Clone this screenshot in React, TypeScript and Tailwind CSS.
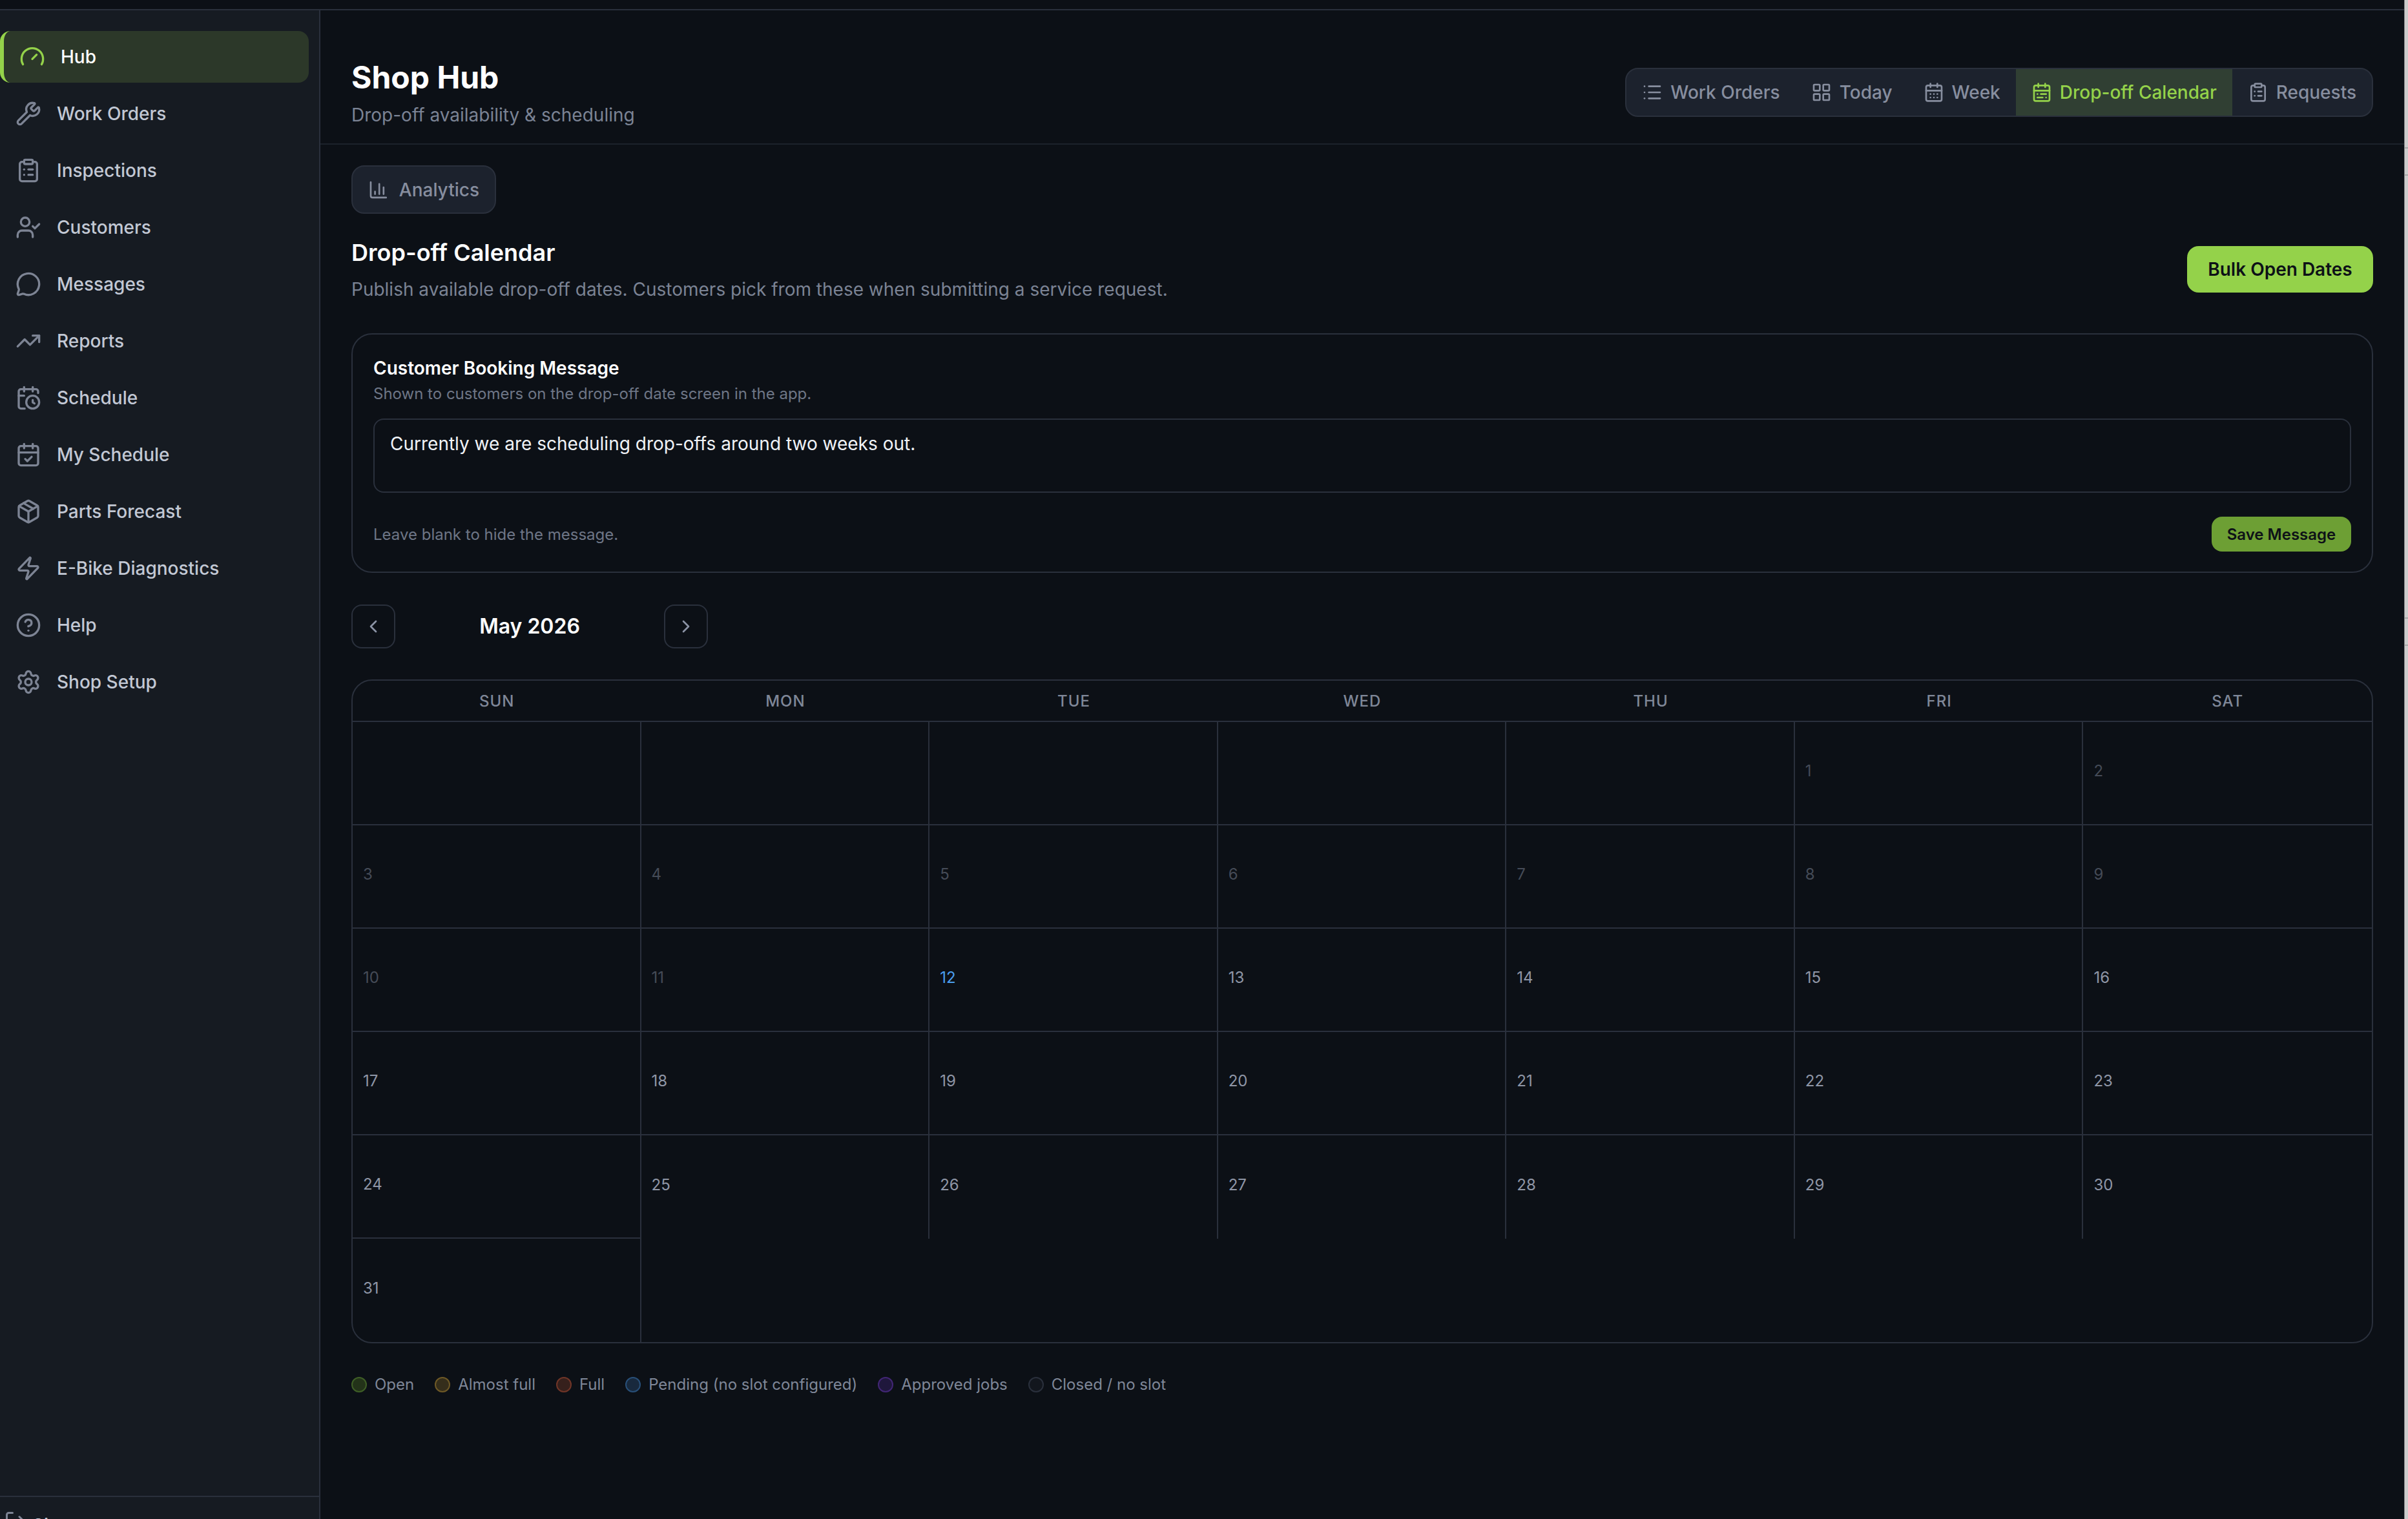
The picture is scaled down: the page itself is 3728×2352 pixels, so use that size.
import React from 'react';
import {
  Gauge, Wrench, ClipboardList, UserCheck, MessageCircle, TrendingUp, CalendarClock, CalendarCheck,
  Package, Zap, CircleHelp, Settings, List, LayoutGrid, CalendarDays, CalendarRange, ChartColumn,
  ChevronLeft, ChevronRight, LogOut,
} from 'lucide-react';

const navItems = [
  { label: 'Hub', icon: Gauge, active: true },
  { label: 'Work Orders', icon: Wrench },
  { label: 'Inspections', icon: ClipboardList },
  { label: 'Customers', icon: UserCheck },
  { label: 'Messages', icon: MessageCircle },
  { label: 'Reports', icon: TrendingUp },
  { label: 'Schedule', icon: CalendarClock },
  { label: 'My Schedule', icon: CalendarCheck },
  { label: 'Parts Forecast', icon: Package },
  { label: 'E-Bike Diagnostics', icon: Zap },
  { label: 'Help', icon: CircleHelp },
  { label: 'Shop Setup', icon: Settings },
];

const tabs = [
  { label: 'Work Orders', icon: List },
  { label: 'Today', icon: LayoutGrid },
  { label: 'Week', icon: CalendarDays },
  { label: 'Drop-off Calendar', icon: CalendarRange, active: true },
  { label: 'Requests', icon: ClipboardList },
];

const weekDays = ['SUN', 'MON', 'TUE', 'WED', 'THU', 'FRI', 'SAT'];

const legend = [
  { label: 'Open', cls: 'bg-[#233319] border-[#3f5f26]' },
  { label: 'Almost full', cls: 'bg-[#352e1b] border-[#6e5926]' },
  { label: 'Full', cls: 'bg-[#36201c] border-[#703527]' },
  { label: 'Pending (no slot configured)', cls: 'bg-[#18293d] border-[#284f78]' },
  { label: 'Approved jobs', cls: 'bg-[#1f173c] border-[#422675]' },
  { label: 'Closed / no slot', cls: 'bg-[#12161d] border-[#2a303c]' },
];

// May 2026 starts on a Friday
const cells: (number | null)[] = [null, null, null, null, null];
for (let d = 1; d <= 31; d++) cells.push(d);

function dayColor(day: number) {
  if (day === 12) return 'text-[#4a9eef]';
  if (day < 12) return 'text-[#454b57]';
  return 'text-[#8f96a6]';
}

function Sidebar() {
  return (
    <aside className="w-[496px] shrink-0 bg-[#161b22] border-r-2 border-[#2a303c] flex flex-col justify-between overflow-hidden">
      <nav className="pt-[32px] pr-[16px] flex flex-col gap-[8px]">
        {navItems.map(item => {
          const Icon = item.icon;
          return (
            <div
              key={item.label}
              className={`h-[80px] flex items-center gap-[24px] rounded-[16px] pl-[24px] text-[28px] font-medium ${
                item.active ? 'bg-[#2c3829] border-l-[6px] border-[#94d24a] text-white' : 'text-[#c2c8d4]'
              }`}
            >
              <Icon size={40} className={item.active ? 'text-[#94d24a]' : 'text-[#7d8494]'} />
              {item.label}
            </div>
          );
        })}
      </nav>
      <div className="h-[36px] shrink-0 border-t-2 border-[#2a303c] pl-[6px] pt-[20px] flex items-start gap-[8px] text-[28px] font-medium text-[#c2c8d4] overflow-hidden">
        <LogOut size={36} className="text-[#7d8494] shrink-0" />
        <span className="mt-[6px] leading-[36px] whitespace-nowrap">Sign out</span>
      </div>
    </aside>
  );
}

function Header() {
  return (
    <header className="border-b-2 border-[#1c222b] px-[48px] pt-[72px] pb-[24px] flex items-center justify-between">
      <div>
        <h1 className="text-[48px] leading-[64px] font-bold text-white">Shop Hub</h1>
        <p className="mt-[6px] text-[28px] leading-[40px] text-[#7b8394]">Drop-off availability &amp; scheduling</p>
      </div>
      <div className="flex h-[76px] rounded-[20px] border-2 border-[#2a303c] bg-[#1c222d] overflow-hidden">
        {tabs.map(tab => {
          const Icon = tab.icon;
          return (
            <div
              key={tab.label}
              className={`flex items-center gap-[12px] px-[24px] text-[28px] font-medium ${
                tab.active ? 'bg-[#303f33] text-[#94d24a]' : 'text-[#878e9f]'
              }`}
            >
              <Icon size={32} />
              {tab.label}
            </div>
          );
        })}
      </div>
    </header>
  );
}

function BookingCard() {
  return (
    <section className="mt-[50px] rounded-[32px] border-2 border-[#2a303c] px-[32px] pt-[32px] pb-[31px]">
      <h3 className="text-[28px] leading-[40px] font-semibold text-white">Customer Booking Message</h3>
      <p className="mt-[4px] text-[24px] leading-[32px] text-[#6e7686]">Shown to customers on the drop-off date screen in the app.</p>
      <textarea
        defaultValue="Currently we are scheduling drop-offs around two weeks out."
        className="mt-[22px] block w-full h-[115px] resize-none rounded-[16px] border-2 border-[#2a303c] bg-transparent px-[24px] pt-[17px] text-[28px] leading-[40px] text-[#f0f3f7] outline-none"
      />
      <div className="mt-[37px] flex items-center justify-between">
        <span className="pt-[2px] text-[24px] leading-[32px] text-[#6e7686]">Leave blank to hide the message.</span>
        <button className="h-[54px] w-[216px] pt-[2px] rounded-[16px] bg-[#6d9f34] text-[24px] font-semibold text-[#0d1117]">Save Message</button>
      </div>
    </section>
  );
}

function Calendar() {
  return (
    <>
      <div className="mt-[49px] flex items-center">
        <button className="w-[68px] h-[68px] rounded-[16px] border-2 border-[#2a303c] flex items-center justify-center text-[#8b93a5]">
          <ChevronLeft size={32} />
        </button>
        <div className="w-[416px] text-center text-[32px] leading-[48px] font-semibold text-white">May 2026</div>
        <button className="w-[68px] h-[68px] rounded-[16px] border-2 border-[#2a303c] flex items-center justify-center text-[#8b93a5]">
          <ChevronRight size={32} />
        </button>
      </div>

      <div className="mt-[48px] rounded-[32px] border-2 border-[#2a303c] overflow-hidden">
        <div className="grid grid-cols-7 h-[64px] border-b-2 border-[#2a303c]">
          {weekDays.map(d => (
            <div key={d} className="pt-[2px] flex items-center justify-center text-[24px] font-medium tracking-[1px] text-[#7f8798]">{d}</div>
          ))}
        </div>
        <div className="grid grid-cols-7">
          {cells.map((day, i) => (
            <div
              key={i}
              className={`h-[160px] flex items-center pl-[16px] pb-[6px] border-[#2a303c] ${(i + 1) % 7 !== 0 ? 'border-r-2' : ''} ${i < cells.length - 7 ? 'border-b-2' : ''}`}
            >
              {day !== null && <span className={`text-[24px] leading-[32px] ${dayColor(day)}`}>{day}</span>}
            </div>
          ))}
        </div>
      </div>

      <div className="mt-[48px] flex items-center gap-[32px]">
        {legend.map(item => (
          <div key={item.label} className="flex items-center gap-[12px] text-[24px] leading-[32px] text-[#7f8798]">
            <span className={`w-[24px] h-[24px] rounded-full border-2 ${item.cls}`} />
            {item.label}
          </div>
        ))}
      </div>
    </>
  );
}

export default function App() {
  return (
    <div className="w-[3728px] h-[2352px] flex overflow-hidden bg-[#0c1016] font-[Inter,sans-serif]">
      <div className="flex-1 min-w-0 flex flex-col">
        <div className="h-[16px] shrink-0 border-b-2 border-[#2a303c]" />
        <div className="flex-1 min-h-0 flex">
          <Sidebar />
          <main className="flex-1 min-w-0">
            <Header />
            <div className="px-[48px] pt-[32px]">
              <button className="h-[75px] w-[224px] flex items-center gap-[16px] px-[24px] rounded-[20px] border-2 border-[#2a303c] bg-[#1c222d] text-[28px] text-[#878e9f] font-medium">
                <ChartColumn size={32} />
                Analytics
              </button>

              <div className="mt-[36px] flex items-center justify-between">
                <div>
                  <h2 className="text-[36px] leading-[48px] font-semibold text-white">Drop-off Calendar</h2>
                  <p className="mt-[15px] text-[28px] leading-[36px] text-[#7b8394]">Publish available drop-off dates. Customers pick from these when submitting a service request.</p>
                </div>
                <button className="h-[72px] w-[288px] rounded-[18px] bg-[#94d24a] text-[28px] font-semibold text-[#0d1117]">Bulk Open Dates</button>
              </div>

              <BookingCard />
              <Calendar />
            </div>
          </main>
        </div>
      </div>

      {/* edge of the window behind */}
      <div className="w-[6px] shrink-0 bg-[#cccccc] border-l border-[#8a8a8a]">
        <div className="h-[230px] border-b-2 border-[#a8a8a8]" />
        <div className="h-[42px] border-b-2 border-[#a8a8a8]" />
        <div className="h-[686px] border-b-2 border-[#a8a8a8]" />
        <div className="h-[42px] border-b-2 border-[#a8a8a8]" />
      </div>
    </div>
  );
}
